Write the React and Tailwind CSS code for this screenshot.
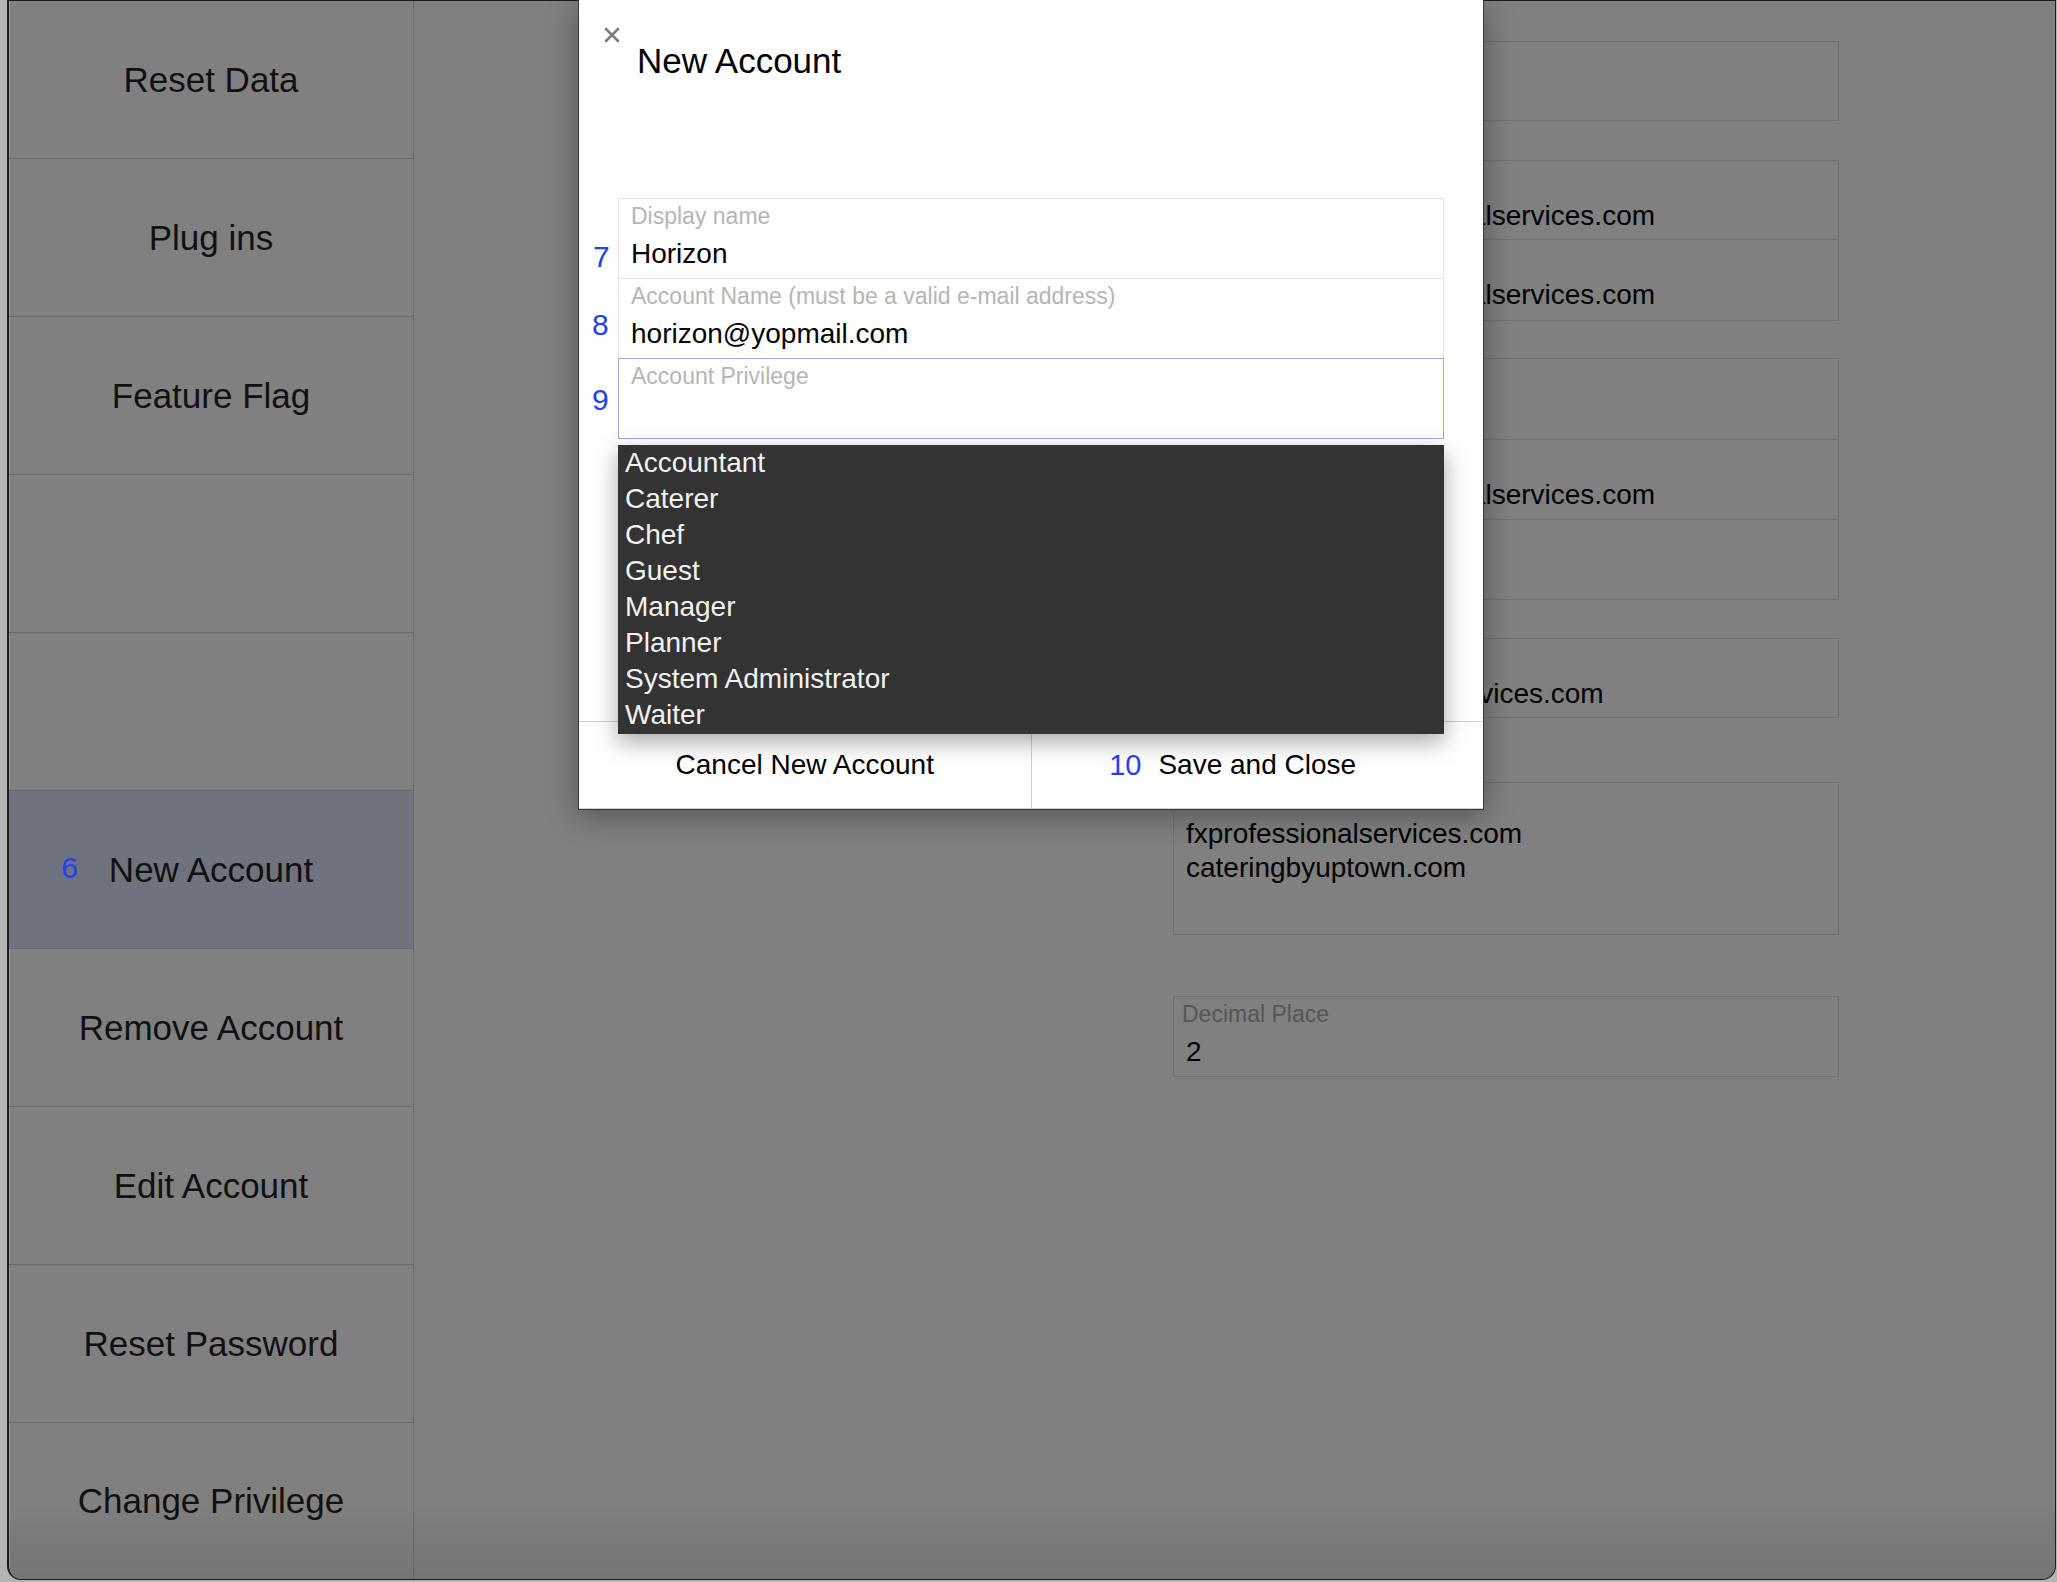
import React from "react";

const sideItems = [
    { label: "Reset Data" },
    { label: "Plug ins" },
    { label: "Feature Flag" },
    { label: "" },
    { label: "" },
    { label: "New Account", num: "6", active: true },
    { label: "Remove Account" },
    { label: "Edit Account" },
    { label: "Reset Password" },
    { label: "Change Privilege" },
];

const privileges = [
    "Accountant",
    "Caterer",
    "Chef",
    "Guest",
    "Manager",
    "Planner",
    "System Administrator",
    "Waiter",
];

// field behind the dimmed overlay
function BgField({ label, value, className = "", valueClass = "pl-[12px]" }) {
    return (
        <div className={"h-[80px] border border-[#707070] " + className}>
            <div className="pl-[8px] pt-[4px] text-[23px] leading-[26px] text-[#565656] whitespace-nowrap">{label}</div>
            <div className={"mt-[9px] text-[28px] leading-[32px] text-black whitespace-nowrap " + valueClass}>{value}</div>
        </div>
    );
}

function ModalField({ label, value, focused, className = "" }) {
    return (
        <div
            className={
                "relative h-[81px] px-[12px] bg-white border " +
                (focused ? "border-[#9eabd3] z-10 " : "border-[#e3e3e3] ") +
                className
            }
        >
            <div className="pt-[4px] text-[23px] leading-[26px] text-[#b5b5b5] whitespace-nowrap">{label}</div>
            <div className="mt-[9px] text-[28px] leading-[32px] text-black whitespace-nowrap">{value}</div>
        </div>
    );
}

export default function App() {
    return (
        <div className="relative w-[2057px] h-[1582px] overflow-hidden bg-[#b3b3b3] pl-[7px] font-['Liberation_Sans',Arial,sans-serif]">
            {/* Window */}
            <div className="relative w-[2049px] h-[1580px] flex overflow-hidden rounded-b-[14px] border border-l-2 border-[#1c1c1c] bg-[#808080] shadow-[inset_1px_0_0_#9a9a9a]">
                {/* Sidebar */}
                <div className="w-[405px] h-full flex flex-col border-r border-[#6a6a6a]">
                    {sideItems.map((item, i) => (
                        <div
                            key={i}
                            className={
                                "h-[158px] shrink-0 flex items-center justify-center " +
                                (i < sideItems.length - 1 ? "border-b border-[#6a6a6a] " : "flex-1 ") +
                                (item.active ? "bg-[#6f737d]" : "")
                            }
                        >
                            <span className="relative text-[35px] leading-[40px] text-[#111]">
                                {item.num && (
                                    <span className="absolute right-full mr-[31px] top-[3px] text-[30px] leading-none text-[#2340f5]">
                                        {item.num}
                                    </span>
                                )}
                                {item.label}
                            </span>
                        </div>
                    ))}
                </div>

                {/* Main settings area */}
                <div className="flex-1 h-full">
                    <div className="ml-[759px] w-[666px] pt-[40px] flex flex-col">
                        <BgField label="Company" value="Uptown" />
                        <BgField className="mt-[39px]" valueClass="pl-[20px]" label="Sender" value="mailbox@fxprofessionalservices.com" />
                        <BgField className="border-t-0 h-[81px]" valueClass="pl-[20px]" label="Reply To" value="mailbox@fxprofessionalservices.com" />
                        <BgField className="mt-[37px] h-[82px]" label="Domain" value="" />
                        <BgField className="border-t-0" valueClass="pl-[20px]" label="Billing" value="mailbox@fxprofessionalservices.com" />
                        <BgField className="border-t-0" label="Support" value="" />
                        <BgField className="mt-[38px]" valueClass="pl-[20px]" label="Sales" value="info@fxprofessionalservices.com" />
                        <div className="mt-[64px] h-[153px] border border-[#707070]">
                            <div className="pl-[8px] pt-[4px] text-[23px] leading-[26px] text-[#565656]">Domains</div>
                            <div className="pl-[12px] mt-[4px] text-[28px] leading-[34px] text-black">
                                <div>fxprofessionalservices.com</div>
                                <div>cateringbyuptown.com</div>
                            </div>
                        </div>
                        <BgField className="mt-[61px] h-[81px]" label="Decimal Place" value="2" />
                    </div>
                </div>

                <div className="pointer-events-none absolute inset-x-0 bottom-0 h-[80px] bg-gradient-to-b from-transparent to-[rgba(0,0,0,0.09)]" />
            </div>

            {/* New Account modal */}
            <div className="absolute left-[578px] top-0 w-[906px] h-[810px] flex flex-col bg-white border-x border-b border-[#3a3a3a] shadow-[0_6px_28px_rgba(0,0,0,0.35)]">
                <button className="absolute left-[24px] top-[26px] w-[18px] h-[18px]">
                    <svg width="18" height="18" viewBox="0 0 18 18">
                        <path d="M3 3 L15 15 M15 3 L3 15" stroke="#7e7e7e" strokeWidth="2.6" strokeLinecap="round" />
                    </svg>
                </button>

                <h2 className="pt-[41px] pl-[58px] text-[35px] leading-[40px] font-normal text-black">New Account</h2>

                <div className="relative mt-[117px] ml-[39px] w-[826px]">
                    <span className="absolute -left-[25px] top-[44px] text-[30px] leading-none text-[#2340f5]">7</span>
                    <span className="absolute -left-[26px] top-[112px] text-[30px] leading-none text-[#2340f5]">8</span>
                    <span className="absolute -left-[26px] top-[187px] text-[30px] leading-none text-[#2340f5]">9</span>
                    <ModalField label="Display name" value="Horizon" />
                    <ModalField className="-mt-px" label="Account Name (must be a valid e-mail address)" value="horizon@yopmail.com" />
                    <ModalField className="-mt-px" label="Account Privilege" value="" focused />
                </div>

                {/* privilege list */}
                <div className="absolute left-[39px] top-[445px] z-20 w-[826px] h-[289px] bg-[#333333] shadow-[0_8px_22px_rgba(0,0,0,0.35)]">
                    {privileges.map((p) => (
                        <div key={p} className="pl-[7px] text-[28px] leading-[36px] text-[#f2f2f2]">{p}</div>
                    ))}
                </div>

                {/* Footer */}
                <div className="mt-auto h-[88px] flex border-t border-b border-[#cfcfcf]">
                    <button className="flex-1 flex items-center justify-center border-r border-[#cfcfcf] text-[28px] text-black">
                        Cancel New Account
                    </button>
                    <button className="flex-1 flex items-center justify-center text-[28px] text-black">
                        <span className="relative">
                            <span className="absolute right-full mr-[17px] text-[29px] text-[#2340f5]">10</span>
                            Save and Close
                        </span>
                    </button>
                </div>
            </div>
        </div>
    );
}
